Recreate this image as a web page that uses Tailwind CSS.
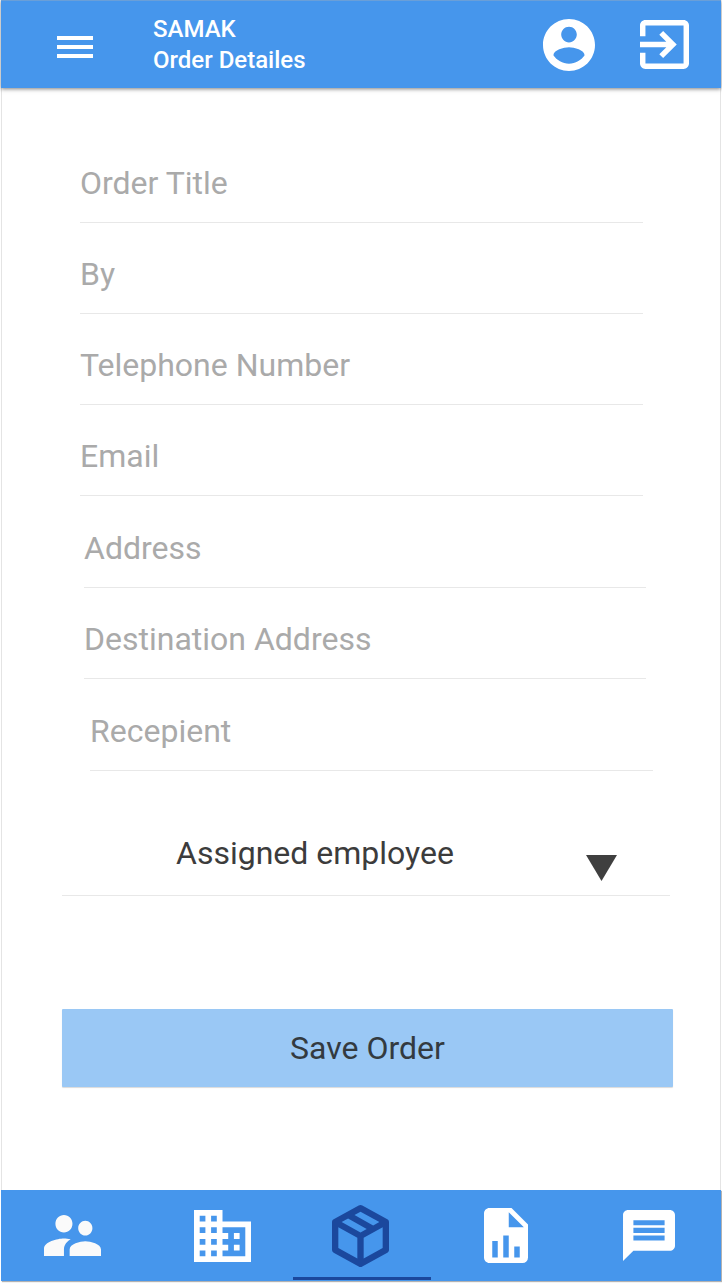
<!DOCTYPE html>
<html lang="en">
<head>
<meta charset="utf-8">
<meta name="viewport" content="width=device-width, initial-scale=1">
<title>SAMAK - Order Detailes</title>
<script src="https://cdn.jsdelivr.net/npm/@tailwindcss/browser@4"></script>
</head>
<body class="bg-white font-['Roboto',sans-serif] text-[32px]">
<div class="flex min-h-screen flex-col px-px pb-[3px]">
  <header class="z-10 flex h-[88px] items-center border-t border-[#6a9fd8] bg-[#4696ec] pr-8 pl-14 text-white shadow-[0_1px_4px_rgba(0,0,0,0.5)]">
    <button type="button" aria-label="Menu" class="mt-1 shrink-0">
      <svg class="block h-[22px] w-9" viewBox="0 0 36 22" fill="currentColor"><path d="M0 0h36v4H0zM0 9h36v4H0zM0 18h36v4H0z"/></svg>
    </button>
    <h1 class="ml-[60px] flex-1 text-[24px] leading-[31px] font-medium"><span class="block">SAMAK</span><span class="block">Order Detailes</span></h1>
    <button type="button" aria-label="Account" class="shrink-0">
      <svg class="block size-[52px]" viewBox="2 2 20 20" fill="currentColor"><path d="M12 2C6.48 2 2 6.48 2 12s4.48 10 10 10 10-4.480 10-10S17.520 2 12 2zm0 3c1.660 0 3 1.340 3 3s-1.340 3-3 3-3-1.340-3-3 1.340-3 3-3zm0 14.200c-2.500 0-4.710-1.280-6-3.220.030-1.990 4-3.080 6-3.080 1.990 0 5.970 1.090 6 3.080-1.290 1.940-3.500 3.220-6 3.220z"/></svg>
    </button>
    <button type="button" aria-label="Log out" class="ml-[45px] shrink-0">
      <svg class="block size-[49px]" viewBox="3 3 18 18" fill="currentColor"><path d="M10.090 15.590L11.500 17l5-5-5-5-1.410 1.410L12.670 11H3v2h9.670l-2.580 2.590zM19 3H5c-1.110 0-2 .9-2 2v4h2V5h14v14H5v-4H3v4c0 1.100.89 2 2 2h14c1.100 0 2-.9 2-2V5c0-1.100-.9-2-2-2z"/></svg>
    </button>
  </header>

  <form class="flex flex-1 flex-col border-x border-[#e4e4e4] pt-11">
    <div class="mr-[77px] ml-[78px]">
      <input type="text" aria-label="Order Title" placeholder="Order Title" class="block h-[91px] w-full border-b border-[#e8e8e8] pt-3 text-[#3c3c3c] outline-none placeholder:text-[#aaaaaa]">
      <input type="text" aria-label="By" placeholder="By" class="block h-[91px] w-full border-b border-[#e8e8e8] pt-3 text-[#3c3c3c] outline-none placeholder:text-[#aaaaaa]">
      <input type="tel" aria-label="Telephone Number" placeholder="Telephone Number" class="block h-[91px] w-full border-b border-[#e8e8e8] pt-3 text-[#3c3c3c] outline-none placeholder:text-[#aaaaaa]">
      <input type="email" aria-label="Email" placeholder="Email" class="block h-[91px] w-full border-b border-[#e8e8e8] pt-3 text-[#3c3c3c] outline-none placeholder:text-[#aaaaaa]">
    </div>
    <div class="mt-px mr-[74px] ml-[82px]">
      <input type="text" aria-label="Address" placeholder="Address" class="block h-[91px] w-full border-b border-[#e8e8e8] pt-3 text-[#3c3c3c] outline-none placeholder:text-[#aaaaaa]">
      <input type="text" aria-label="Destination Address" placeholder="Destination Address" class="block h-[91px] w-full border-b border-[#e8e8e8] pt-3 text-[#3c3c3c] outline-none placeholder:text-[#aaaaaa]">
    </div>
    <div class="mt-px mr-[67px] ml-[88px]">
      <input type="text" aria-label="Recepient" placeholder="Recepient" class="block h-[91px] w-full border-b border-[#e8e8e8] pt-3 text-[#3c3c3c] outline-none placeholder:text-[#aaaaaa]">
    </div>
    <div class="relative mt-8 mr-[50px] ml-[60px]">
      <select aria-label="Assigned employee" class="block h-[93px] w-full appearance-none border-b border-[#e8e8e8] pt-2 pr-20 pl-[114px] text-[#3c3c3c] outline-none">
        <option>Assigned employee</option>
      </select>
      <svg class="pointer-events-none absolute right-[53px] bottom-[15px] h-[26px] w-[31px]" viewBox="0 0 31 26" fill="#3f3f3f"><path d="M0 0h31L15.500 26z"/></svg>
    </div>
    <button type="submit" class="mt-[113px] mr-[47px] mb-12 ml-[60px] h-[78px] rounded-[1px] bg-[#9ac8f5] text-[#333a40] shadow-[0_1px_1px_rgba(0,0,0,0.15)]">Save Order</button>
  </form>

  <nav aria-label="Main" class="grid h-[91px] grid-cols-[142fr_150fr_138fr_150fr_140fr] bg-[#4696ec] text-white shadow-[1px_1px_1px_rgba(0,0,0,0.3)]">
    <a href="#people" aria-label="People" class="flex items-center justify-center text-[#fafafa]">
      <svg class="block h-[41px] w-[57px]" viewBox="2 5 20 14" preserveAspectRatio="none" fill="currentColor"><path d="M16.500 12c1.380 0 2.490-1.120 2.490-2.500S17.880 7 16.500 7C15.120 7 14 8.120 14 9.500s1.120 2.500 2.500 2.500zM9 11c1.660 0 2.990-1.340 2.990-3S10.660 5 9 5C7.340 5 6 6.340 6 8s1.340 3 3 3zm7.500 3c-1.830 0-5.500.92-5.500 2.750V19h11v-2.250c0-1.830-3.670-2.750-5.500-2.750zM9 13c-2.330 0-7 1.170-7 3.500V19h7v-2.250c0-.85.33-2.340 2.370-3.470C10.500 13.100 9.660 13 9 13z"/></svg>
    </a>
    <a href="#companies" aria-label="Companies" class="flex items-center justify-center pl-2">
      <svg class="block h-[52px] w-[57px]" viewBox="2 3 20 18" preserveAspectRatio="none" fill="currentColor"><path d="M12 7V3H2v18h20V7H12zM6 19H4v-2h2v2zm0-4H4v-2h2v2zm0-4H4V9h2v2zm0-4H4V5h2v2zm4 12H8v-2h2v2zm0-4H8v-2h2v2zm0-4H8V9h2v2zm0-4H8V5h2v2zm10 12h-8v-2h2v-2h-2v-2h2v-2h-2V9h8v10zm-2-8h-2v2h2v-2zm0 4h-2v2h2v-2z"/></svg>
    </a>
    <a href="#orders" aria-label="Orders" aria-current="page" class="mb-px flex items-center justify-center border-b-[3px] border-[#1b489d] pr-1 pt-1 text-[#1b489d]">
      <svg class="block h-[62px] w-[57px]" viewBox="3 2 18 20" preserveAspectRatio="none" fill="currentColor"><path d="M21 16.500c0 .38-.21.71-.53.88l-7.900 4.440c-.16.12-.36.18-.57.18s-.41-.06-.57-.18l-7.900-4.440A.991.991 0 0 1 3 16.500v-9c0-.38.21-.71.53-.88l7.900-4.440c.16-.12.36-.18.57-.18s.41.06.57.18l7.900 4.440c.32.17.53.5.53.88v9M12 4.150L10.110 5.220 16 8.610 17.960 7.500 12 4.150M6.040 7.500L12 10.850l1.960-1.100L8.080 6.350 6.040 7.500M5 15.910l6 3.380v-6.710L5 9.210v6.700m14 0v-6.700l-6 3.370v6.710l6-3.380z"/></svg>
    </a>
    <a href="#reports" aria-label="Reports" class="flex items-center justify-center">
      <svg class="block h-[55px] w-11" viewBox="4 2 16 20" preserveAspectRatio="none" fill="currentColor"><path d="M13 9h5.500L13 3.500V9M6 2h8l6 6v12a2 2 0 0 1-2 2H6c-1.110 0-2-.9-2-2V4c0-1.110.89-2 2-2m1 18h2v-6H7v6m4 0h2v-8h-2v8m4 0h2v-4h-2v4z"/></svg>
    </a>
    <a href="#messages" aria-label="Messages" class="flex items-center justify-center pr-1">
      <svg class="block h-[51px] w-[52px]" viewBox="2 2 20 20" preserveAspectRatio="none" fill="currentColor"><path d="M20 2H4c-1.100 0-1.990.9-1.990 2L2 22l4-4h14c1.100 0 2-.9 2-2V4c0-1.100-.9-2-2-2zm-2 12H6v-2h12v2zm0-3H6V9h12v2zm0-3H6V6h12v2z"/></svg>
    </a>
  </nav>
</div>
</body>
</html>
